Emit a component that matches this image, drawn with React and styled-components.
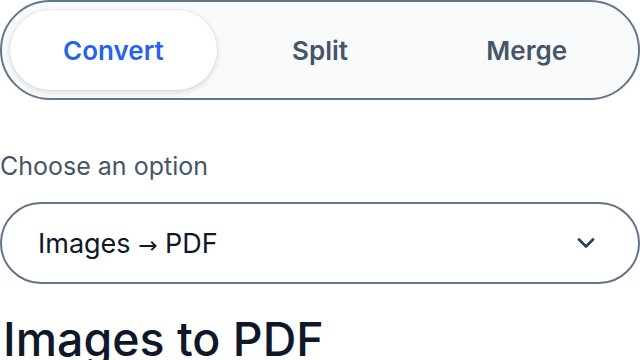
import React, { useState } from 'react';
import styled, { createGlobalStyle } from 'styled-components';
import { ChevronDown } from 'lucide-react';

const GlobalStyle = createGlobalStyle`
  html, body {
    margin: 0;
    padding: 0;
    background: #ffffff;
    font-family: Inter, "Noto Sans", sans-serif;
  }
`;

const Page = styled.div`
  width: 640px;
  display: flex;
  flex-direction: column;
`;

const TabBar = styled.div`
  box-sizing: border-box;
  height: 100px;
  padding: 8px;
  display: grid;
  grid-template-columns: repeat(3, 1fr);
  background: #f8fafc;
  border: 2px solid #64748b;
  border-radius: 9999px;
`;

const Tab = styled.button`
  border: none;
  border-radius: 9999px;
  font-family: inherit;
  font-size: 26px;
  font-weight: 600;
  cursor: pointer;
  background: ${p => (p.$active ? '#ffffff' : 'transparent')};
  color: ${p => (p.$active ? '#2563eb' : '#475569')};
  box-shadow: ${p =>
    p.$active ? '0 2px 6px rgba(15, 23, 42, 0.14), 0 0 0 1px rgba(15, 23, 42, 0.04)' : 'none'};
`;

const Label = styled.label`
  margin-top: 48px;
  font-size: 25px;
  line-height: 36px;
  color: #475569;
`;

const Select = styled.div`
  box-sizing: border-box;
  margin-top: 18px;
  height: 82px;
  padding: 0 38px 0 36px;
  display: flex;
  align-items: center;
  justify-content: space-between;
  border: 2px solid #64748b;
  border-radius: 9999px;
  font-size: 27px;
  color: #0f172a;
  svg {
    color: #334155;
  }
`;

const Arrow = styled.span`
  font-family: "DejaVu Sans", sans-serif;
  font-size: 23px;
`;

const Heading = styled.h1`
  margin: 28px 0 0 3px;
  font-size: 46.5px;
  font-weight: 500;
  line-height: 1.2;
  color: #0f172a;
`;

const tabs = ['Convert', 'Split', 'Merge'];

export default function App() {
  const [active, setActive] = useState('Convert');
  return (
    <Page>
      <GlobalStyle />
      <TabBar>
        {tabs.map(t => (
          <Tab key={t} $active={t === active} onClick={() => setActive(t)}>
            {t}
          </Tab>
        ))}
      </TabBar>
      <Label>Choose an option</Label>
      <Select>
        <span>
          Images <Arrow>→</Arrow> PDF
        </span>
        <ChevronDown size={28} strokeWidth={2.4} />
      </Select>
      <Heading>Images to PDF</Heading>
    </Page>
  );
}
